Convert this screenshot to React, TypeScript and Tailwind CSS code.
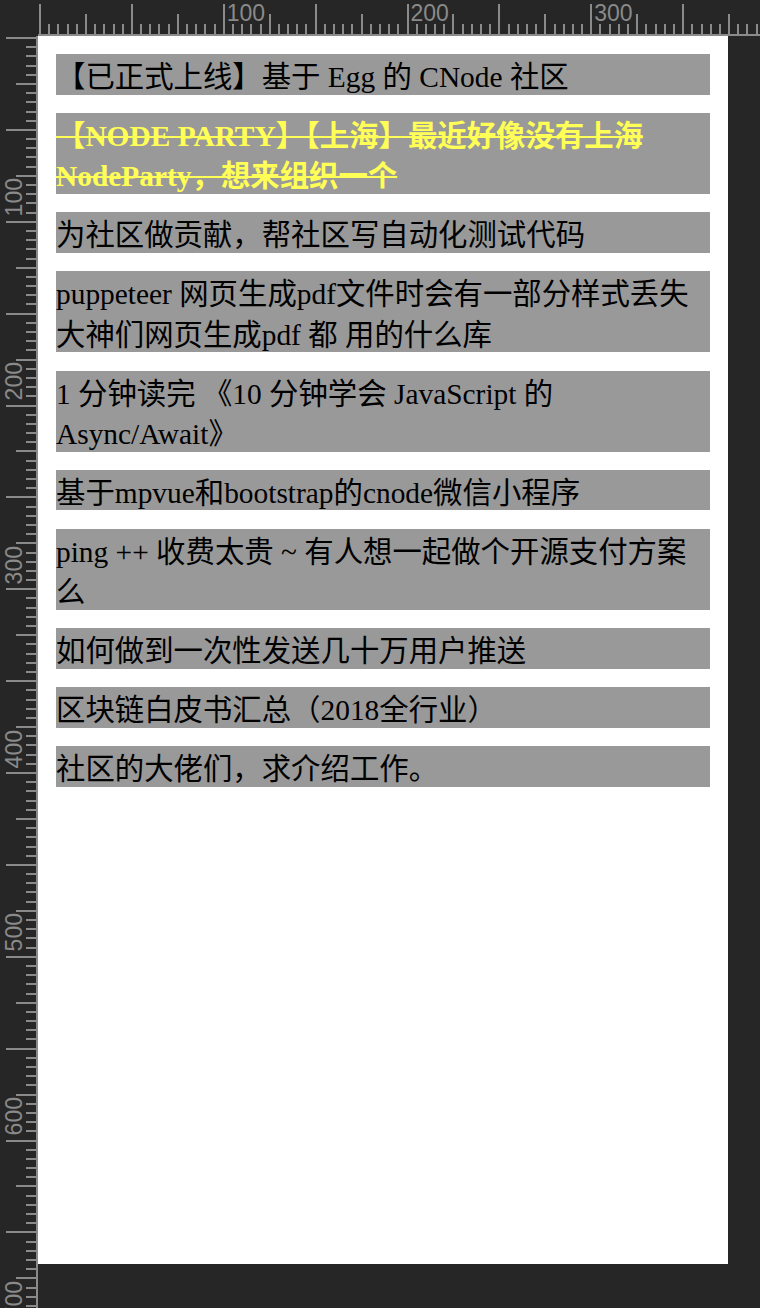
import React from "react";

const topics: { title: string; done?: boolean }[] = [
  { title: "【已正式上线】基于 Egg 的 CNode 社区" },
  { title: "【NODE PARTY】【上海】最近好像没有上海NodeParty，想来组织一个", done: true },
  { title: "为社区做贡献，帮社区写自动化测试代码" },
  { title: "puppeteer 网页生成pdf文件时会有一部分样式丢失大神们网页生成pdf 都 用的什么库" },
  { title: "1 分钟读完 《10 分钟学会 JavaScript 的 Async/Await》" },
  { title: "基于mpvue和bootstrap的cnode微信小程序" },
  { title: "ping ++ 收费太贵 ~ 有人想一起做个开源支付方案么" },
  { title: "如何做到一次性发送几十万用户推送" },
  { title: "区块链白皮书汇总（2018全行业）" },
  { title: "社区的大佬们，求介绍工作。" },
];

// one segment = 5 units = 9.2px
const topSegs = Array.from({ length: 80 }, (_, i) => i);
const leftSegs = Array.from({ length: 145 }, (_, i) => i);

function TopRuler() {
  return (
    <div className="h-[36px] overflow-hidden border-b-2 border-[#8a8a8a]">
      <div className="flex h-[34px] pl-[1px]">
        {topSegs.map((i) => (
          <div key={i} className="relative flex h-full w-[9.2px] shrink-0 items-end">
            <div
              className={
                i % 10 === 0
                  ? "h-[30px] w-[2px] bg-[#8a8a8a]"
                  : i % 5 === 0
                  ? "h-[20px] w-[2px] bg-[#8a8a8a]"
                  : "h-[10px] w-[2px] bg-[#8a8a8a]"
              }
            />
            {i > 0 && i % 20 === 0 && (
              <span className="absolute left-[4px] top-[2px] text-[23px] leading-[23px] text-[#8a8a8a] [font-family:'Liberation_Sans',Arial,sans-serif]">
                {i * 5}
              </span>
            )}
          </div>
        ))}
      </div>
    </div>
  );
}

function LeftRuler() {
  return (
    <div className="h-full overflow-hidden border-r-2 border-[#8a8a8a]">
      <div className="flex flex-col pt-[1px]">
        {leftSegs.map((i) => (
          <div key={i} className="relative flex h-[9.2px] w-full shrink-0 justify-end">
            <div
              className={
                i % 10 === 0
                  ? "h-[2px] w-[30px] bg-[#8a8a8a]"
                  : i % 5 === 0
                  ? "h-[2px] w-[20px] bg-[#8a8a8a]"
                  : "h-[2px] w-[10px] bg-[#8a8a8a]"
              }
            />
            {i > 0 && i % 20 === 0 && (
              <span className="absolute bottom-[calc(100%+4px)] left-[3px] rotate-180 text-[23px] leading-[23px] text-[#8a8a8a] [writing-mode:vertical-rl] [font-family:'Liberation_Sans',Arial,sans-serif]">
                {i * 5}
              </span>
            )}
          </div>
        ))}
      </div>
    </div>
  );
}

export default function App() {
  return (
    <div className="grid h-[1308px] w-[760px] grid-cols-[38px_722px] grid-rows-[36px_1272px] overflow-hidden bg-[#262626]">
      <div />
      <TopRuler />
      <LeftRuler />

      {/* Page */}
      <div>
        <div className="flex h-[1228px] w-[690px] flex-col gap-[18.4px] bg-white px-[18px] pt-[18px] [font-family:'Liberation_Serif','Noto_Sans_CJK_SC',serif]">
          {topics.map((t, idx) => (
            <div
              key={idx}
              className={
                t.done
                  ? "bg-[#999999] text-[29.4px] font-bold leading-[40.5px] text-[#ffff55] line-through"
                  : "bg-[#999999] text-[29.4px] leading-[40.5px] text-black"
              }
            >
              <span className="relative top-[3px]">{t.title}</span>
            </div>
          ))}
        </div>
      </div>
    </div>
  );
}
